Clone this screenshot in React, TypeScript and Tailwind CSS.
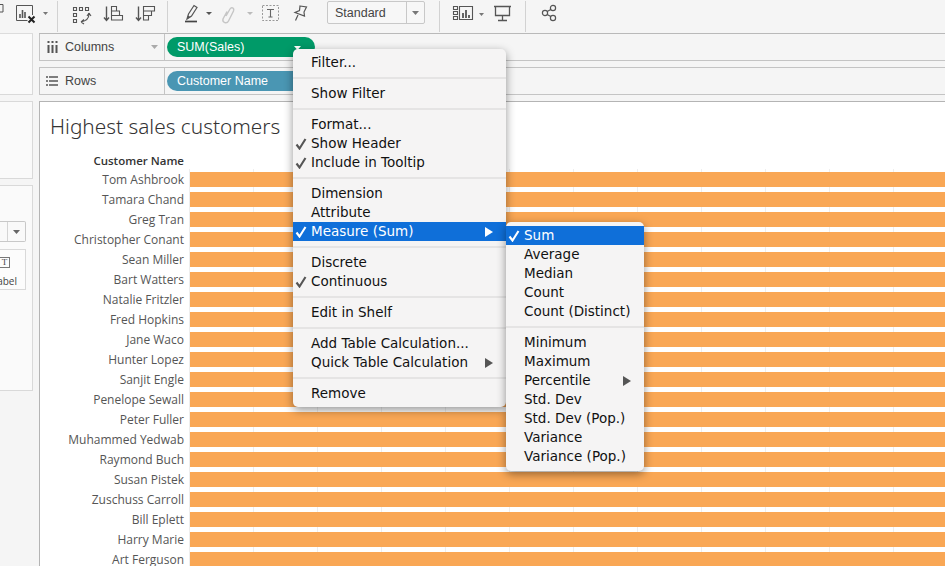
const NAMES = [
  "Tom Ashbrook",
  "Tamara Chand",
  "Greg Tran",
  "Christopher Conant",
  "Sean Miller",
  "Bart Watters",
  "Natalie Fritzler",
  "Fred Hopkins",
  "Jane Waco",
  "Hunter Lopez",
  "Sanjit Engle",
  "Penelope Sewall",
  "Peter Fuller",
  "Muhammed Yedwab",
  "Raymond Buch",
  "Susan Pistek",
  "Zuschuss Carroll",
  "Bill Eplett",
  "Harry Marie",
  "Art Ferguson",
];

const GRID_LINES = [189, 253, 317, 381, 445, 509, 573, 637, 701, 765, 829, 893];

type MenuEntry = { label?: string; checked?: boolean; active?: boolean; arrow?: boolean };

const MAIN_MENU: MenuEntry[] = [
  { label: "Filter..." },
  {},
  { label: "Show Filter" },
  {},
  { label: "Format..." },
  { label: "Show Header", checked: true },
  { label: "Include in Tooltip", checked: true },
  {},
  { label: "Dimension" },
  { label: "Attribute" },
  { label: "Measure (Sum)", checked: true, active: true, arrow: true },
  {},
  { label: "Discrete" },
  { label: "Continuous", checked: true },
  {},
  { label: "Edit in Shelf" },
  {},
  { label: "Add Table Calculation..." },
  { label: "Quick Table Calculation", arrow: true },
  {},
  { label: "Remove" },
];

const SUB_MENU: MenuEntry[] = [
  { label: "Sum", checked: true, active: true },
  { label: "Average" },
  { label: "Median" },
  { label: "Count" },
  { label: "Count (Distinct)" },
  {},
  { label: "Minimum" },
  { label: "Maximum" },
  { label: "Percentile", arrow: true },
  { label: "Std. Dev" },
  { label: "Std. Dev (Pop.)" },
  { label: "Variance" },
  { label: "Variance (Pop.)" },
];

function Caret({ fill = "#777" }: { fill?: string }) {
  return (
    <svg width="7" height="4" viewBox="0 0 7 4" className="block">
      <path d="M0 0h7L3.500 4z" fill={fill} />
    </svg>
  );
}

function SmallCaret({ fill = "#777" }: { fill?: string }) {
  return (
    <svg width="5" height="3" viewBox="0 0 5 3" className="block">
      <path d="M0 0h5L2.500 3z" fill={fill} />
    </svg>
  );
}

function Menu({ entries, className }: { entries: MenuEntry[]; className: string }) {
  return (
    <div
      className={`absolute rounded-[5px] bg-[#f5f4f4] shadow-[0_3px_10px_rgba(0,0,0,0.42)] font-['DejaVu_Sans',sans-serif] text-[13.5px] text-[#111] ${className}`}
    >
      {entries.map((entry, i) =>
        entry.label ? (
          <div
            key={i}
            className={`relative flex h-[19px] items-center pl-[18px] leading-[19px] ${
              entry.active ? "bg-[#0f6fd9] text-white" : ""
            }`}
          >
            {entry.checked && (
              <svg width="12" height="12" viewBox="0 0 12 12" className="absolute left-[2px] top-[4px]">
                <path
                  d="M1.500 6.500 L4.500 10.500 L10.500 1"
                  fill="none"
                  stroke={entry.active ? "#fff" : "#555"}
                  strokeWidth="2.100"
                />
              </svg>
            )}
            <span>{entry.label}</span>
            {entry.arrow && (
              <svg width="8" height="10" viewBox="0 0 8 10" className="absolute right-[13px] top-[5px]">
                <path d="M0 0 L8 5 L0 10z" fill={entry.active ? "#fff" : "#555"} />
              </svg>
            )}
          </div>
        ) : (
          <div key={i} className="flex h-[12px] items-center">
            <div className="h-[2px] w-full bg-[#e5e4e4]" />
          </div>
        ),
      )}
    </div>
  );
}

function Toolbar() {
  const stroke = "#555";
  return (
    <div className="flex h-[33px] shrink-0 items-start bg-[#f5f5f5] pt-[1px]">
      <div className="relative h-[31px] w-[58px] shrink-0 border-r border-[#d2d2d2]">
        <svg width="40" height="26" viewBox="0 0 40 26" className="absolute left-0 top-0">
          <path d="M0 3.500h3V11H0" fill="none" stroke={stroke} />
          <path d="M32.500 14V4.500H16.500v15h11" fill="none" stroke={stroke} />
          <path d="M20 17v-4M22.500 17V9M25 17v-6" stroke={stroke} strokeWidth="1.600" />
          <path d="M28.500 15.500l6 6M34.500 15.500l-6 6" stroke="#222" strokeWidth="2" />
        </svg>
        <div className="absolute left-[43px] top-[11px]">
          <SmallCaret />
        </div>
      </div>
      <div className="relative h-[31px] w-[110px] shrink-0 border-r border-[#d2d2d2]">
        <svg width="100" height="24" viewBox="0 0 100 24" className="absolute left-[13px] top-[4px]">
          <g fill="none" stroke={stroke} strokeWidth="1.100">
            <path d="M2.500 2.500h3v3h-3zM8.500 2.500h3v3h-3zM14.500 2.500h3v3h-3zM2.500 8.500h3v3h-3zM2.500 14.500h3v3h-3z" />
            <path d="M18 9c0 4-3 7-8 8M10 17l3-2.500M10 17l3 2M18 8l-2 3M18 8l2 3" />
            <path d="M35.500 1.500v13.500M33 12.500l2.500 3 2.500-3" strokeWidth="1.400" />
            <path d="M40.500 1.500h5v4.500h-5zM40.500 6h8v4.500h-8zM40.500 10.500h11v4.500h-11z" />
            <path d="M67.500 1.500v13.500M65 12.500l2.500 3 2.500-3" strokeWidth="1.400" />
            <path d="M72.500 1.500h11v4.500h-11zM72.500 6h8v4.500h-8zM72.500 10.500h5v4.500h-5z" />
          </g>
        </svg>
      </div>
      <div className="relative flex h-[31px] w-[272px] shrink-0 items-start border-r border-[#d2d2d2]">
        <svg width="126" height="22" viewBox="0 0 126 22" className="absolute left-[16px] top-[3px]">
          <path d="M3 15 L4.500 10 L10 1.500 L13 3.500 L7.500 12z" fill="none" stroke="#555" strokeWidth="1.200" />
          <path d="M3 15l1-3.500 2.500 1.500z" fill="#555" />
          <path d="M1 17.500h12" stroke="#444" strokeWidth="1.700" />
          <path d="M22 8h6l-3 3z" fill="#555" />
          <path
            d="M42 12L46 5C47.500 2.500 50.500 4 49.500 7L44.500 17C43 20 38 19 39 15L43 7.500"
            fill="none"
            stroke="#c6c6c6"
            strokeWidth="1.400"
          />
          <path d="M63 8h6l-3 3z" fill="#bbb" />
          <rect x="78.500" y="1.500" width="16" height="15" fill="none" stroke="#999" strokeDasharray="2 1.500" />
          <path d="M83 5.500h7M86.500 5.500v7.500M84.500 13h4" fill="none" stroke="#666" strokeWidth="1.100" />
          <path
            d="M116 2 L122.500 3 L120 8 L120.500 12 L111 8.500 L115.500 6.500z M114 11 L111.500 16.500"
            fill="none"
            stroke="#555"
            strokeWidth="1.200"
          />
        </svg>
        <div className="absolute left-[159px] top-0 flex h-[23px] w-[98px] items-center rounded-[2px] border border-[#c8c8c8] bg-[#f7f7f7] font-['Liberation_Sans',sans-serif] text-[12.5px] text-[#444]">
          <span className="flex-1 pl-[7px] pt-[1px]">Standard</span>
          <span className="flex h-full w-[18px] items-center justify-center border-l border-[#c8c8c8]">
            <Caret />
          </span>
        </div>
      </div>
      <div className="relative h-[31px] w-[86px] shrink-0 border-r border-[#d2d2d2]">
        <svg width="72" height="24" viewBox="0 0 72 24" className="absolute left-[12px] top-[3px]">
          <g fill="none" stroke={stroke} strokeWidth="1.100">
            <path d="M1.500 2.500h4v3h-4zM1.500 7.500h4v3h-4zM1.500 12.500h4v3h-4zM7.500 2.500h13v13h-13z" />
            <path d="M11 14v-5M14 14V6M17 14v-3" strokeWidth="1.800" />
            <path d="M42 2.500h17M43.500 3v8.500h14V3M50.500 11.500v5M46 16.500h9" strokeWidth="1.300" />
          </g>
        </svg>
        <div className="absolute left-[39px] top-[12px]">
          <SmallCaret />
        </div>
      </div>
      <div className="relative h-[31px] flex-1">
        <svg width="18" height="20" viewBox="0 0 18 20" className="absolute left-[15px] top-[3px]">
          <g fill="none" stroke="#555" strokeWidth="1.200">
            <circle cx="12" cy="4" r="2.600" />
            <circle cx="4" cy="9" r="2.600" />
            <circle cx="12" cy="14" r="2.600" />
            <path d="M6.200 7.600L9.800 5.400M6.200 10.400L9.800 12.600" />
          </g>
        </svg>
      </div>
    </div>
  );
}

function Sidebar() {
  return (
    <div className="flex w-[33px] shrink-0 flex-col border-t border-[#dcdcdc]">
      <div className="h-[61px] border-r border-b border-[#d9d9d9] bg-[#fafafa]" />
      <div className="mt-[6px] h-[78px] border-y border-r border-[#d9d9d9] bg-[#fafafa]" />
      <div className="mt-[6px] flex h-[206px] flex-col border-y border-r border-[#d9d9d9] bg-[#fafafa] pr-[6px] pt-[35px]">
        <div className="flex h-[21px] w-full items-center rounded-r-[2px] border-y border-r border-[#c8c8c8] bg-[#f9f9f9] pl-[7px]">
          <span className="flex h-full flex-1 items-center justify-center border-l border-[#d4d4d4]">
            <Caret fill="#666" />
          </span>
        </div>
        <div className="relative mt-[7px] h-[41px] w-full border-y border-r border-[#d9d9d9] bg-[#fcfcfc] font-['Open_Sans',sans-serif] text-[10px] text-[#444]">
          <div className="absolute left-0 top-[7px] flex h-[11px] w-[10px] items-center justify-center border border-l-0 border-[#777] font-['Liberation_Serif',serif] text-[9px] leading-none">
            T
          </div>
          <div className="absolute right-[8px] top-[24px] text-[10px] leading-[14px]">abel</div>
        </div>
      </div>
    </div>
  );
}

function Shelf({
  icon,
  label,
  pillClass,
  pill,
  caret,
  heightClass,
  hasDrop,
}: {
  icon: React.ReactNode;
  label: string;
  pillClass: string;
  pill: string;
  caret?: boolean;
  heightClass: string;
  hasDrop?: boolean;
}) {
  return (
    <div className={`flex items-stretch border-y border-[#c4c4c4] ${heightClass}`}>
      <div className="relative flex w-[126px] shrink-0 items-center border-x border-[#c4c4c4] pl-[6px] font-['Liberation_Sans',sans-serif] text-[12.5px] text-[#444]">
        <span className="mr-[7px] flex w-[12px] justify-center">{icon}</span>
        {label}
        {hasDrop && (
          <span className="absolute right-[6px] top-[11px]">
            <Caret fill="#aaa" />
          </span>
        )}
      </div>
      <div className="flex items-center pl-[2px]">
        <div
          className={`relative flex h-[20px] w-[148px] items-center rounded-[10px] pl-[10px] font-['Liberation_Sans',sans-serif] text-[12.5px] text-white ${pillClass}`}
        >
          {pill}
          {caret && (
            <svg width="7" height="4" viewBox="0 0 7 4" className="absolute right-[14px] top-[9px]">
              <path d="M0 0h7L3.500 4z" fill="#fff" />
            </svg>
          )}
        </div>
      </div>
    </div>
  );
}

export default function App() {
  return (
    <div className="relative flex h-[566px] w-[945px] flex-col overflow-hidden bg-[#f5f5f5]">
      <Toolbar />
      <div className="flex min-h-0 flex-1">
        <Sidebar />
        <div className="ml-[6px] flex min-w-0 flex-1 flex-col border-t border-[#b9b9b9]">
          <Shelf
            heightClass="h-[27px] border-t-0"
            icon={
              <svg width="11" height="12" viewBox="0 0 11 12">
                <path d="M1.500 4v8M5.500 4v8M9.500 4v8M0.500 1h2M4.500 1h2M8.500 1h2" stroke="#555" strokeWidth="2" />
              </svg>
            }
            label="Columns"
            pill="SUM(Sales)"
            pillClass="bg-[#009a68]"
            caret
            hasDrop
          />
          <div className="mt-[6px]">
            <Shelf
              heightClass="h-[28px]"
              icon={
                <svg width="12" height="10" viewBox="0 0 12 10">
                  <path d="M3 1h9M3 5h9M3 9h9M0 1h2M0 5h2M0 9h2" stroke="#555" strokeWidth="1.500" />
                </svg>
              }
              label="Rows"
              pill="Customer Name"
              pillClass="bg-[#4a96b3]"
            />
          </div>
          <div className="mt-[6px] min-h-0 flex-1 border-t border-l border-[#b4b4b4] bg-white pl-[10px]">
            <h1 className="mt-[8px] h-[32px] font-['Noto_Sans',sans-serif] text-[20.8px] font-light leading-[32px] text-[#333]">
              Highest sales customers
            </h1>
            <div className="mt-[11px] flex h-[16px] w-[134px] items-center justify-end font-['Open_Sans',sans-serif] text-[11.5px] font-semibold text-[#333]">
              Customer Name
            </div>
            <div className="relative mt-[3px]">
              {GRID_LINES.map((x) => (
                <div
                  key={x}
                  className="absolute -top-[3px] bottom-0 w-px bg-[#eeeeee]"
                  style={{ left: x - 50 }}
                />
              ))}
              {NAMES.map((name) => (
                <div key={name} className="flex h-[20px]">
                  <div className="flex h-[15px] w-[134px] shrink-0 items-center justify-end whitespace-nowrap font-['Open_Sans',sans-serif] text-[12px] text-[#555]">
                    {name}
                  </div>
                  <div className="relative ml-[6px] h-[15px] flex-1 bg-[#f9a755]" />
                </div>
              ))}
            </div>
          </div>
        </div>
      </div>
      <Menu entries={MAIN_MENU} className="left-[293px] top-[49px] w-[213px] pt-[4px] pb-[4px]" />
      <Menu entries={SUB_MENU} className="left-[506px] top-[222px] w-[138px] pt-[4px] pb-[5px]" />
    </div>
  );
}
